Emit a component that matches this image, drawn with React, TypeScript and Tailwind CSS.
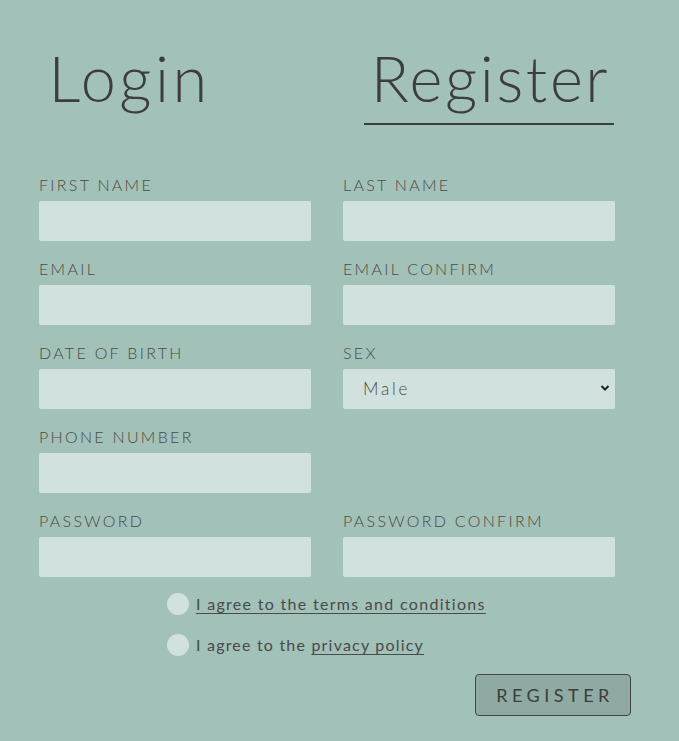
import React from "react";

const font = { fontFamily: "Lato, 'Open Sans', sans-serif" };

function Field({ label, children }: { label: string; children?: React.ReactNode }) {
  return (
    <div className="flex flex-col">
      <label className="text-[16px] leading-[20px] tracking-[2.3px] text-[#4d4a42] mb-[6px] font-light">{label}</label>
      {children ?? <input className="h-[40px] w-[272px] rounded-[2px] bg-[#d1e1dd] outline-none px-3" />}
    </div>
  );
}

export default function App() {
  return (
    <div className="w-[679px] h-[741px] bg-[#a2c1b9] text-[#3d3d3d] overflow-hidden" style={font}>
      <div className="flex pt-[38px] pl-[3px]">
        <div className="w-[250px] flex justify-center">
          <span className="text-[63px] leading-[80px] font-light tracking-[3.5px] pl-[3px]">Login</span>
        </div>
        <div className="w-[250px] ml-[111px] flex justify-center border-b-2 border-[#3d3d3d] pb-[5px]">
          <span className="text-[63px] leading-[80px] font-light tracking-[2.6px] pl-[3px]">Register</span>
        </div>
      </div>
      <div className="pl-[39px] pt-[50px] grid grid-cols-[272px_272px] gap-x-[32px] gap-y-[18px]">
        <Field label="FIRST NAME" />
        <Field label="LAST NAME" />
        <Field label="EMAIL" />
        <Field label="EMAIL CONFIRM" />
        <Field label="DATE OF BIRTH" />
        <Field label="SEX">
          <div className="relative h-[40px] w-[272px] rounded-[2px] bg-[#d1e1dd] flex items-center">
            <span className="pl-[20px] text-[17px] tracking-[2.8px] font-light text-[#4d4a42]">Male</span>
            <svg className="absolute right-[5px] top-[15px]" width="10" height="8" viewBox="0 0 10 8">
              <path d="M1.5 2 L5 5.5 L8.5 2" stroke="#222" strokeWidth="2" fill="none" />
            </svg>
          </div>
        </Field>
        <Field label="PHONE NUMBER" />
        <div />
        <Field label="PASSWORD" />
        <Field label="PASSWORD CONFIRM" />
      </div>
      <div className="pl-[167px] pt-[16px] flex flex-col gap-[19px] text-[16px] text-[#4a4a4a]">
        <div className="flex items-center gap-[7px] h-[22px]">
          <span className="w-[22px] h-[22px] rounded-full bg-[#d1e1dd]" />
          <span className="underline underline-offset-[3px] tracking-[1.3px]">I agree to the terms and conditions</span>
        </div>
        <div className="flex items-center gap-[7px] h-[22px]">
          <span className="w-[22px] h-[22px] rounded-full bg-[#d1e1dd]" />
          <span className="tracking-[1.2px]">
            I agree to the <span className="underline underline-offset-[3px]">privacy policy</span>
          </span>
        </div>
      </div>
      <div className="flex justify-end pr-[48px] pt-[18px]">
        <button className="w-[156px] h-[42px] rounded-[4px] border border-[#444] bg-[#8fa9a3] text-[18px] tracking-[4.5px] text-[#3d3d3d] pl-[4px]">
          REGISTER
        </button>
      </div>
    </div>
  );
}
